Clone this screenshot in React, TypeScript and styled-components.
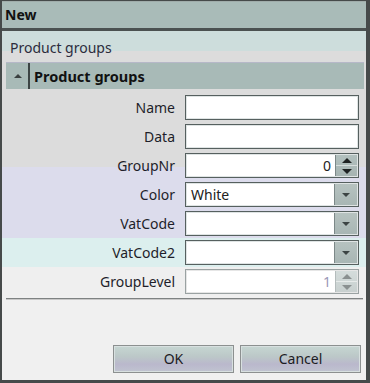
import React from "react";
import styled, { createGlobalStyle } from "styled-components";

const Global = createGlobalStyle`
  html, body { margin: 0; padding: 0; background: #ffffff; }
  * { box-sizing: border-box; }
  body { font-family: "Noto Sans", "Open Sans", sans-serif; }
`;

const Window = styled.div`
  width: 370px;
  height: 383px;
  display: flex;
  flex-direction: column;
  border-style: solid;
  border-color: #464a4a;
  border-width: 1px 4px 3px 2px;
  background: #f0f0f0;
  overflow: hidden;
`;

const TitleBar = styled.div`
  height: 30px;
  flex: none;
  display: flex;
  align-items: center;
  padding: 0 0 1px 3px;
  background: #a9bbb8;
  border-top: 1px solid #a0acaa;
  border-bottom: 3px solid #4b5151;
  font-size: 14px;
  font-weight: 700;
  color: #111;
`;

const Body = styled.div`
  flex: 1;
  display: flex;
  flex-direction: column;
`;

const SectionLabel = styled.div`
  height: 31px;
  flex: none;
  padding: 7px 0 0 8px;
  font-size: 14px;
  color: #2c2c3c;
  background: linear-gradient(#cddddc 0, #cddddc 20px, #dcdcdc 20px);
`;

const PanelHeader = styled.div`
  height: 31px;
  flex: none;
  display: flex;
  padding: 0 2px 4px 4px;
  background: #dcdcdc;
`;

const HeaderBar = styled.div`
  flex: 1;
  display: flex;
  align-items: stretch;
  background: #a8bab7;
  border-top: 1px solid #b6b8c8;
`;

const Toggle = styled.div`
  width: 24px;
  display: flex;
  align-items: center;
  justify-content: center;
  border-right: 2px solid #3c4444;
  padding-left: 2px;
`;

const Caret = styled.div`
  width: 0;
  height: 0;
  border-left: 4px solid transparent;
  border-right: 4px solid transparent;
  border-bottom: 4px solid #3a4040;
`;

const HeaderTitle = styled.div`
  display: flex;
  align-items: center;
  padding-left: 4px;
  font-size: 14.5px;
  font-weight: 700;
  color: #111;
`;

const Row = styled.div<{ $bg: string }>`
  height: 29px;
  flex: none;
  display: flex;
  align-items: center;
  background: ${(p) => p.$bg};
`;

const Label = styled.div`
  width: 173px;
  flex: none;
  text-align: right;
  font-size: 14px;
  color: #1e1e2a;
  padding-bottom: 1px;
`;

const Field = styled.div<{ $disabled?: boolean }>`
  margin-left: 10px;
  width: 174px;
  height: 25px;
  display: flex;
  background: #fff;
  border: 1px solid ${(p) => (p.$disabled ? "#9aa2a2" : "#56605f")};
  box-shadow: inset 0 0 0 1px ${(p) => (p.$disabled ? "#e6e6e6" : "#dfe4e4")};
`;

const Value = styled.div<{ $align?: string; $muted?: boolean }>`
  flex: 1;
  display: flex;
  align-items: center;
  justify-content: ${(p) => (p.$align === "right" ? "flex-end" : "flex-start")};
  padding: 0 4px 1px 5px;
  font-size: 14px;
  color: ${(p) => (p.$muted ? "#9a98b8" : "#222")};
`;

const SpinBox = styled.div<{ $disabled?: boolean }>`
  width: 22px;
  flex: none;
  display: flex;
  flex-direction: column;
  margin: 1px 1px 1px 0;
  background: ${(p) =>
    p.$disabled
      ? "linear-gradient(#d4dcdb, #c8d0cf)"
      : "linear-gradient(#b2c0be, #a6b4b2)"};
  border-left: 1px solid ${(p) => (p.$disabled ? "#b4bcbc" : "#7c8888")};
`;

const SpinHalf = styled.div`
  flex: 1;
  display: flex;
  align-items: center;
  justify-content: center;
  & + & {
    border-top: 1px solid rgba(255, 255, 255, 0.5);
  }
`;

const Tri = styled.div<{ $up?: boolean; $color?: string }>`
  width: 0;
  height: 0;
  border-left: 5px solid transparent;
  border-right: 5px solid transparent;
  ${(p) =>
    p.$up
      ? `border-bottom: 5px solid ${p.$color || "#1e2222"};`
      : `border-top: 5px solid ${p.$color || "#1e2222"};`}
`;

const DropButton = styled.div`
  width: 23px;
  flex: none;
  display: flex;
  align-items: center;
  justify-content: center;
  margin: 1px 1px 1px 0;
  background: linear-gradient(#b6c2c0, #a8b6b4);
  border-left: 1px solid #7c8888;
`;

const SmallTri = styled.div`
  width: 0;
  height: 0;
  border-left: 4px solid transparent;
  border-right: 4px solid transparent;
  border-top: 4px solid #3c4444;
`;

const Divider = styled.div`
  height: 2px;
  margin: 2px 3px 0 4px;
  background: #7e8282;
  border-bottom: 1px solid #c8c8c8;
`;

const Spacer = styled.div`
  flex: 1;
`;

const ButtonBar = styled.div`
  display: flex;
  justify-content: flex-end;
  gap: 6px;
  padding: 0 5px 7px 0;
`;

const Button = styled.button`
  width: 121px;
  height: 28px;
  border: 1px solid #8c9090;
  background: linear-gradient(#c6d6d2 0%, #bcc8c8 40%, #bab8cc 70%, #c0c4d0 100%);
  box-shadow: inset 0 0 0 1px #d8e0e0;
  font-family: "Noto Sans", "Open Sans", sans-serif;
  font-size: 14px;
  color: #1c1c24;
  padding: 0 0 1px;
`;

type Kind = "text" | "spin" | "combo";
interface RowDef {
  label: string;
  kind: Kind;
  value?: string;
  bg: string;
  disabled?: boolean;
}

const rows: RowDef[] = [
  { label: "Name", kind: "text", bg: "#dcdcdc" },
  { label: "Data", kind: "text", bg: "#dcdcdc" },
  {
    label: "GroupNr",
    kind: "spin",
    value: "0",
    bg: "linear-gradient(#dcdcdc 0, #dcdcdc 16px, #dcdcec 16px)",
  },
  { label: "Color", kind: "combo", value: "White", bg: "#dcdcec" },
  { label: "VatCode", kind: "combo", bg: "#dcdcec" },
  { label: "VatCode2", kind: "combo", bg: "#dcefee" },
  { label: "GroupLevel", kind: "spin", value: "1", bg: "#efefef", disabled: true },
];

function FieldFor({ r }: { r: RowDef }) {
  if (r.kind === "spin") {
    const c = r.disabled ? "#8a9090" : "#1e2222";
    return (
      <Field $disabled={r.disabled}>
        <Value $align="right" $muted={r.disabled}>
          {r.value}
        </Value>
        <SpinBox $disabled={r.disabled}>
          <SpinHalf>
            <Tri $up $color={c} />
          </SpinHalf>
          <SpinHalf>
            <Tri $color={c} />
          </SpinHalf>
        </SpinBox>
      </Field>
    );
  }
  if (r.kind === "combo") {
    return (
      <Field>
        <Value>{r.value}</Value>
        <DropButton>
          <SmallTri />
        </DropButton>
      </Field>
    );
  }
  return (
    <Field>
      <Value>{r.value}</Value>
    </Field>
  );
}

export default function App() {
  return (
    <>
      <Global />
      <Window>
        <TitleBar>New</TitleBar>
        <Body>
          <SectionLabel>Product groups</SectionLabel>
          <PanelHeader>
            <HeaderBar>
              <Toggle>
                <Caret />
              </Toggle>
              <HeaderTitle>Product groups</HeaderTitle>
            </HeaderBar>
          </PanelHeader>
          {rows.map((r) => (
            <Row key={r.label} $bg={r.bg}>
              <Label>{r.label}</Label>
              <FieldFor r={r} />
            </Row>
          ))}
          <Divider />
          <Spacer />
          <ButtonBar>
            <Button>OK</Button>
            <Button>Cancel</Button>
          </ButtonBar>
        </Body>
      </Window>
    </>
  );
}
